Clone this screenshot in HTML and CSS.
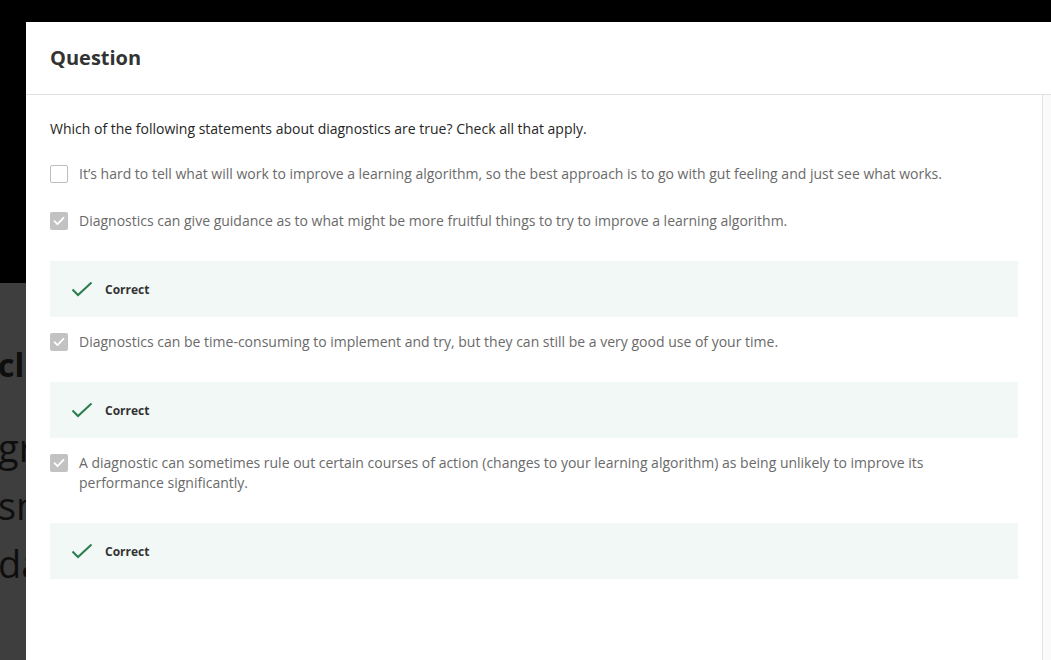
FILE: index.html
```html
<!DOCTYPE html>
<html lang="en">
<head>
<meta charset="utf-8">
<title>Question</title>
<link rel="stylesheet" href="styles.css">
</head>
<body>
<div class="backdrop">
  <div class="backdrop-header"></div>
  <div class="backdrop-content">
    <div class="bg-heading">click</div>
    <div class="bg-line">gradient</div>
    <div class="bg-line">small</div>
    <div class="bg-line">data</div>
  </div>
</div>

<div class="modal">
  <div class="modal-header">
    <h2 class="modal-title">Question</h2>
  </div>
  <div class="modal-body">
    <div class="modal-content">
      <p class="prompt">Which of the following statements about diagnostics are true? Check all that apply.</p>

      <div class="option">
        <span class="checkbox"></span>
        <span class="option-text">It’s hard to tell what will work to improve a learning algorithm, so the best approach is to go with gut feeling and just see what works.</span>
      </div>

      <div class="option">
        <span class="checkbox checked"><svg viewBox="0 0 18 18" width="18" height="18"><path d="M4.5 9.2l3 3 6-6.4" fill="none" stroke="#fff" stroke-width="1.8" stroke-linecap="round" stroke-linejoin="round"/></svg></span>
        <span class="option-text">Diagnostics can give guidance as to what might be more fruitful things to try to improve a learning algorithm.</span>
      </div>
      <div class="feedback">
        <svg class="feedback-icon" viewBox="0 0 22 16" width="22" height="16"><path d="M1.5 8.5l5.5 5.5 13.5-12.5" fill="none" stroke="#2a7d4f" stroke-width="2"/></svg>
        <span class="feedback-text">Correct</span>
      </div>

      <div class="option">
        <span class="checkbox checked"><svg viewBox="0 0 18 18" width="18" height="18"><path d="M4.5 9.2l3 3 6-6.4" fill="none" stroke="#fff" stroke-width="1.8" stroke-linecap="round" stroke-linejoin="round"/></svg></span>
        <span class="option-text">Diagnostics can be time-consuming to implement and try, but they can still be a very good use of your time.</span>
      </div>
      <div class="feedback">
        <svg class="feedback-icon" viewBox="0 0 22 16" width="22" height="16"><path d="M1.5 8.5l5.5 5.5 13.5-12.5" fill="none" stroke="#2a7d4f" stroke-width="2"/></svg>
        <span class="feedback-text">Correct</span>
      </div>

      <div class="option">
        <span class="checkbox checked"><svg viewBox="0 0 18 18" width="18" height="18"><path d="M4.5 9.2l3 3 6-6.4" fill="none" stroke="#fff" stroke-width="1.8" stroke-linecap="round" stroke-linejoin="round"/></svg></span>
        <span class="option-text">A diagnostic can sometimes rule out certain courses of action (changes to your learning algorithm) as being unlikely to improve its performance significantly.</span>
      </div>
      <div class="feedback">
        <svg class="feedback-icon" viewBox="0 0 22 16" width="22" height="16"><path d="M1.5 8.5l5.5 5.5 13.5-12.5" fill="none" stroke="#2a7d4f" stroke-width="2"/></svg>
        <span class="feedback-text">Correct</span>
      </div>
    </div>
    <div class="scroll-track"></div>
  </div>
</div>
</body>
</html>
```

FILE: styles.css
```css
html, body {
  margin: 0;
  padding: 0;
  height: 100%;
  overflow: hidden;
}

body {
  background: #3e3e3e;
  font-family: "Open Sans", "Liberation Sans", sans-serif;
  position: relative;
}

.backdrop-header {
  height: 283px;
  background: #000;
}

.backdrop-content {
  margin-left: -2px;
  color: #0e0e0e;
  white-space: nowrap;
}

.bg-heading {
  margin-top: 62px;
  font-size: 32px;
  font-weight: 700;
  line-height: 40px;
}

.bg-line {
  font-size: 38px;
  line-height: 58px;
}

.bg-heading + .bg-line {
  margin-top: 33px;
}

.modal {
  position: absolute;
  left: 26px;
  top: 22px;
  right: 0;
  bottom: 0;
  background: #fff;
  display: flex;
  flex-direction: column;
}

.modal-header {
  height: 72px;
  border-bottom: 1px solid #e1e1e1;
  display: flex;
  align-items: center;
  padding-left: 24px;
  flex-shrink: 0;
}

.modal-title {
  margin: 0;
  font-size: 20px;
  font-weight: 700;
  color: #333;
  line-height: 28px;
}

.modal-body {
  flex: 1;
  display: flex;
}

.modal-content {
  flex: 1;
  padding: 24px 24px 0 24px;
}

.scroll-track {
  width: 8px;
  border-left: 1px solid #e3e3e3;
  background: #fafafa;
}

.prompt {
  margin: 0 0 25px 0;
  font-size: 14px;
  line-height: 20px;
  color: #262626;
}

.option {
  display: flex;
  align-items: flex-start;
  margin-bottom: 27px;
}

.checkbox {
  width: 18px;
  height: 18px;
  box-sizing: border-box;
  border: 1px solid #bdbdbd;
  border-radius: 2px;
  margin-top: 1px;
  margin-right: 11px;
  flex-shrink: 0;
  background: #fff;
}

.checkbox.checked {
  background: #c2c2c2;
  border: none;
}

.checkbox svg {
  display: block;
}

.option-text {
  font-size: 14px;
  line-height: 20px;
  color: #6a6a6a;
  max-width: 880px;
}

.feedback {
  height: 56px;
  margin-top: 30px;
  margin-bottom: 15px;
  background: #f2f8f5;
  display: flex;
  align-items: center;
  padding-left: 21px;
}

.feedback-icon {
  display: block;
  margin-right: 12px;
}

.feedback-text {
  font-size: 12px;
  font-weight: 700;
  color: #333;
}
```
